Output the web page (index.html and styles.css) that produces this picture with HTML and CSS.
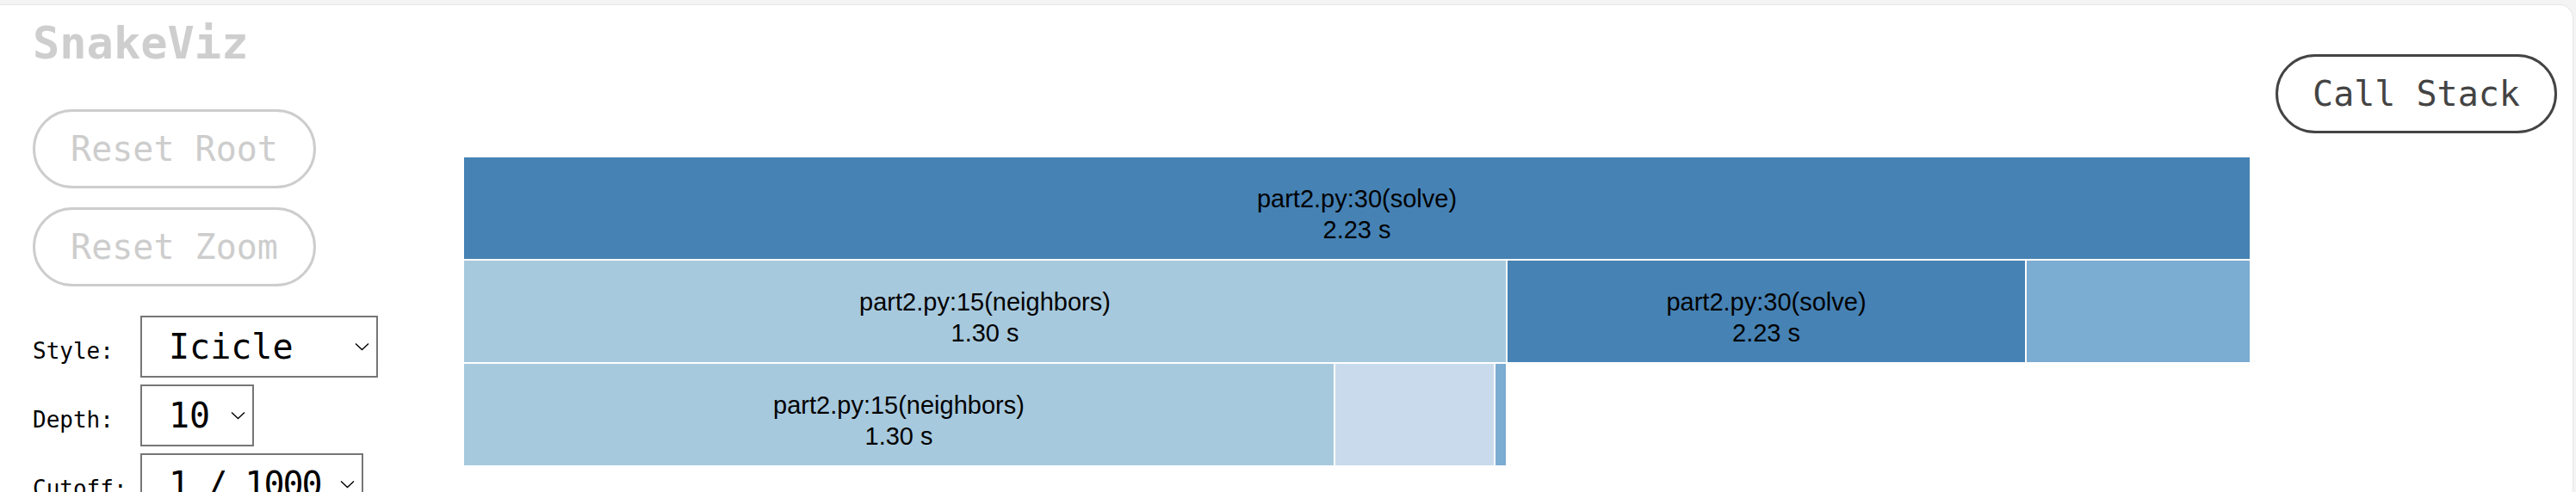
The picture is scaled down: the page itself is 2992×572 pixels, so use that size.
FILE: index.html
```html
<!DOCTYPE html>
<html lang="en">
<head>
<meta charset="utf-8">
<title>SnakeViz</title>
<link rel="stylesheet" href="styles.css">
</head>
<body>
<div class="panel">
  <aside class="sidebar">
    <h1 class="title">SnakeViz</h1>
    <button class="pill pill-disabled pill-first">Reset Root</button>
    <button class="pill pill-disabled pill-second">Reset Zoom</button>
    <div class="options">
      <label class="opt-label">Style:</label>
      <div class="select select-style"><span>Icicle</span><svg class="chev" width="17" height="10" viewBox="0 0 17 10"><polyline points="1,1.5 8.5,8.5 16,1.5" fill="none" stroke="#000" stroke-width="1.4"/></svg></div>
      <label class="opt-label">Depth:</label>
      <div class="select select-depth"><span>10</span><svg class="chev" width="17" height="10" viewBox="0 0 17 10"><polyline points="1,1.5 8.5,8.5 16,1.5" fill="none" stroke="#000" stroke-width="1.4"/></svg></div>
      <label class="opt-label">Cutoff:</label>
      <div class="select select-cutoff"><span class="cutoff-text">1 / 1000</span><svg class="chev" width="17" height="10" viewBox="0 0 17 10"><polyline points="1,1.5 8.5,8.5 16,1.5" fill="none" stroke="#000" stroke-width="1.4"/></svg></div>
    </div>
  </aside>
  <main class="chart">
    <svg class="icicle" width="2080" height="364" viewBox="0 0 2080 364">
      <g class="cells">
        <rect x="1" y="1" width="2076" height="120" fill="#4682b4"/>
        <rect x="1" y="121" width="1212" height="120" fill="#a7c9dd"/>
        <rect x="1213" y="121" width="603" height="120" fill="#4682b4"/>
        <rect x="1816" y="121" width="261" height="120" fill="#7bacd2"/>
        <rect x="1" y="241" width="1012" height="120" fill="#a7c9dd"/>
        <rect x="1013" y="241" width="186" height="120" fill="#c8daeb"/>
        <rect x="1199" y="241" width="14" height="120" fill="#7bacd2"/>
      </g>
      <g class="labels">
        <text x="1039" y="60">part2.py:30(solve)</text>
        <text x="1039" y="96">2.23 s</text>
        <text x="607" y="180">part2.py:15(neighbors)</text>
        <text x="607" y="216">1.30 s</text>
        <text x="1514.5" y="180">part2.py:30(solve)</text>
        <text x="1514.5" y="216">2.23 s</text>
        <text x="507" y="300">part2.py:15(neighbors)</text>
        <text x="507" y="336">1.30 s</text>
      </g>
    </svg>
  </main>
  <div class="right">
    <button class="pill pill-dark">Call Stack</button>
  </div>
</div>
</body>
</html>
```
FILE: styles.css
```css
html, body {
  margin: 0;
  padding: 0;
  height: 100%;
  overflow: hidden;
  background: #f4f4f4;
}

.panel {
  margin-top: 5px;
  margin-right: 3px;
  height: calc(100% - 5px);
  box-sizing: border-box;
  background: #ffffff;
  border-top: 1px solid #e6e6e6;
  border-right: 1px solid #e6e6e6;
  border-top-right-radius: 16px;
  display: flex;
  align-items: flex-start;
  overflow: hidden;
}

.sidebar {
  flex: 0 0 537px;
  box-sizing: border-box;
  padding-left: 38px;
  padding-top: 14px;
}

.title {
  margin: 0;
  font-family: "DejaVu Sans Mono", monospace;
  font-weight: bold;
  font-size: 52px;
  line-height: 60px;
  color: #cecece;
}

.pill {
  display: block;
  box-sizing: border-box;
  width: 329px;
  height: 92px;
  padding: 0;
  border-radius: 46px;
  background: #ffffff;
  font-family: "DejaVu Sans Mono", monospace;
  font-size: 40px;
  text-align: center;
}

.pill-disabled {
  border: 3px solid #cdcdcd;
  color: #cdcdcd;
}

.pill-first {
  margin-top: 47px;
}

.pill-second {
  margin-top: 22px;
}

.pill-dark {
  width: 327px;
  border: 3px solid #444444;
  color: #444444;
  margin-left: auto;
  margin-right: 18px;
  margin-top: 57px;
}

.options {
  margin-top: 34px;
  display: grid;
  grid-template-columns: 125px auto;
  row-gap: 8px;
  align-items: baseline;
  justify-items: start;
}

.opt-label {
  font-family: "DejaVu Sans Mono", monospace;
  font-size: 26px;
  color: #000000;
}

.select {
  box-sizing: border-box;
  height: 72px;
  border: 2px solid #767676;
  background: #ffffff;
  display: flex;
  align-items: center;
  justify-content: space-between;
  padding: 0 8px 0 31px;
  font-family: "DejaVu Sans Mono", monospace;
  font-size: 40px;
  color: #000000;
}

.select-style { width: 276px; }
.select-depth { width: 132px; }
.select-cutoff { width: 259px; }

.cutoff-text {
  letter-spacing: -2px;
}

.chev {
  flex: 0 0 auto;
  display: block;
  margin-left: 6px;
}

.chart {
  flex: 0 0 2080px;
  margin-top: 175px;
}

.icicle {
  display: block;
}

.cells rect {
  stroke: #ffffff;
  stroke-width: 2;
}

.labels text {
  font-family: "Liberation Sans", Arial, sans-serif;
  font-size: 29px;
  fill: #000000;
  text-anchor: middle;
}

.right {
  flex: 1 1 auto;
  display: flex;
}
```
